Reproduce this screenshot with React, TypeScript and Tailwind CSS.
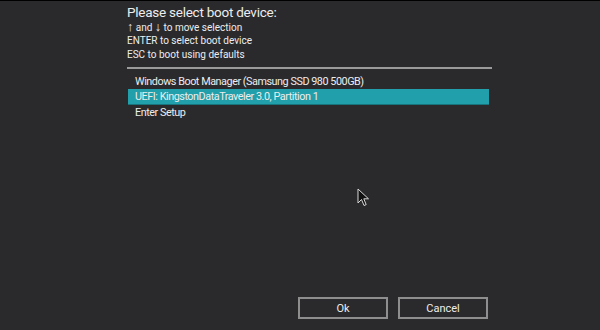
import React from 'react';

const devices = [
  'Windows Boot Manager (Samsung SSD 980 500GB)',
  'UEFI: KingstonDataTraveler 3.0, Partition 1',
  'Enter Setup',
];

function Pointer() {
  return (
    <svg width="13" height="19" viewBox="0 0 13 19" className="absolute left-[357px] top-[187px]">
      <path
        d="M1 1 L1 15 L4.5 11.5 L7 17.5 L9.2 16.6 L6.8 10.8 L11.5 10.8 Z"
        fill="#111"
        stroke="#d8d8d8"
        strokeWidth="1"
        strokeLinejoin="round"
      />
    </svg>
  );
}

export default function App() {
  const selected = 1;

  return (
    <div className="relative w-[600px] h-[330px] bg-[#2a2a2c] border-t border-black flex flex-col text-[#ededed] font-['Roboto',sans-serif]">
      <div className="pl-[127px] pt-[2px] w-[492px]">
        <h1 className="text-[13.5px] leading-[18px] tracking-[-0.25px]">Please select boot device:</h1>
        <div className="text-[10px] leading-[13.3px]">
          <div>
            <span className="text-[12.5px] leading-none">↑</span> and <span className="text-[12.5px] leading-none">↓</span> to move selection
          </div>
          <div>ENTER to select boot device</div>
          <div>ESC to boot using defaults</div>
        </div>

        {/* divider */}
        <div className="mt-[6px] h-[2px] bg-[#9a9a9a]" />

        {/* boot list */}
        <div className="mt-[5px] w-[361px] ml-[1px] text-[10.8px] tracking-[-0.45px]">
          {devices.map((d, i) => (
            <div
              key={d}
              className={`h-[15.5px] leading-[15px] pl-[7px] ${i === selected ? 'bg-[#21a0ab] border-b border-[#17747c]' : ''}`}
            >
              {d}
            </div>
          ))}
        </div>
      </div>

      {/* buttons */}
      <div className="mt-auto mb-[11px] flex justify-end gap-[10px] pr-[112px]">
        <button className="w-[90px] h-[22px] border-2 border-[#8e8e8e] text-[11px] leading-none text-[#ededed]">
          Ok
        </button>
        <button className="w-[90px] h-[22px] border-2 border-[#8e8e8e] text-[11px] leading-none text-[#ededed]">
          Cancel
        </button>
      </div>

      <Pointer />
    </div>
  );
}
